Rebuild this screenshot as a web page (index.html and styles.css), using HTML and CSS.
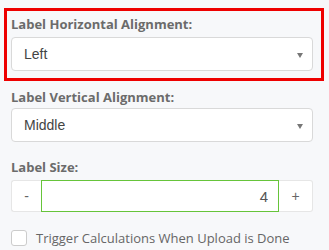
FILE: index.html
```html
<!DOCTYPE html>
<html lang="en">
<head>
    <meta charset="UTF-8">
    <meta name="viewport" content="width=device-width, initial-scale=1.0">
    <title>Label Settings</title>
    <link rel="stylesheet" href="styles.css">
</head>
<body>
    <div class="panel">
        <div class="field highlight">
            <label class="field-label">Label Horizontal Alignment:</label>
            <div class="select-box">
                <span>Left</span>
                <span class="caret"></span>
            </div>
        </div>

        <div class="field vertical">
            <label class="field-label">Label Vertical Alignment:</label>
            <div class="select-box">
                <span>Middle</span>
                <span class="caret"></span>
            </div>
        </div>

        <div class="field size">
            <label class="field-label">Label Size:</label>
            <div class="stepper">
                <button class="step minus">-</button>
                <input class="step-value" type="text" value="4">
                <button class="step plus">+</button>
            </div>
        </div>

        <label class="check-row">
            <span class="check-box"></span>
            <span>Trigger Calculations When Upload is Done</span>
        </label>
    </div>
</body>
</html>
```

FILE: styles.css
```css
body {
    margin: 0;
    padding: 0;
    background-color: #f7f8fa;
    font-family: "Open Sans", Arial, sans-serif;
    color: #666;
}

.panel {
    padding: 8px 5px 0 4px;
}

.field {
    display: flex;
    flex-direction: column;
}

.highlight {
    border: 3px solid #ee0000;
    padding: 4px 8px 7px 4px;
}

.vertical {
    margin-top: 7px;
    padding: 0 11px 0 7px;
}

.vertical .field-label {
    margin-bottom: 2px;
}

.size {
    margin-top: 16px;
    padding: 0 11px 0 7px;
}

.field-label {
    font-size: 13px;
    font-weight: bold;
    line-height: 18px;
    color: #6b6b6b;
    margin-bottom: 4px;
}

.select-box {
    display: flex;
    justify-content: space-between;
    align-items: center;
    height: 34px;
    box-sizing: border-box;
    background-color: #fff;
    border: 1px solid #d9d9d9;
    border-radius: 4px;
    padding: 0 9px 0 12px;
    font-family: "Liberation Sans", Arial, sans-serif;
    font-size: 14px;
    color: #444;
}

.caret {
    width: 0;
    height: 0;
    border-left: 3.5px solid transparent;
    border-right: 3.5px solid transparent;
    border-top: 5px solid #777;
    margin-top: 2px;
}

.stepper {
    display: flex;
    height: 32px;
}

.step {
    background-color: #fff;
    border: 1px solid #e6e6e6;
    font-family: "Liberation Sans", Arial, sans-serif;
    font-size: 14px;
    color: #666;
    padding: 0;
}

.minus {
    width: 30px;
    border-right: none;
    border-radius: 3px 0 0 3px;
}

.plus {
    width: 34px;
    border-left: none;
    border-radius: 0 3px 3px 0;
}

.step-value {
    flex: 1;
    min-width: 0;
    box-sizing: border-box;
    border: 1px solid #66c43a;
    outline: none;
    text-align: right;
    padding: 0 10px 0 0;
    font-family: "Liberation Sans", Arial, sans-serif;
    font-size: 15px;
    color: #555;
}

.check-row {
    display: flex;
    align-items: center;
    gap: 9px;
    margin-top: 17px;
    padding-left: 7px;
    font-size: 13px;
    line-height: 18px;
    color: #666;
}

.check-box {
    width: 16px;
    height: 16px;
    box-sizing: border-box;
    background-color: #fff;
    border: 1px solid #ccc;
    border-radius: 3px;
}
```
